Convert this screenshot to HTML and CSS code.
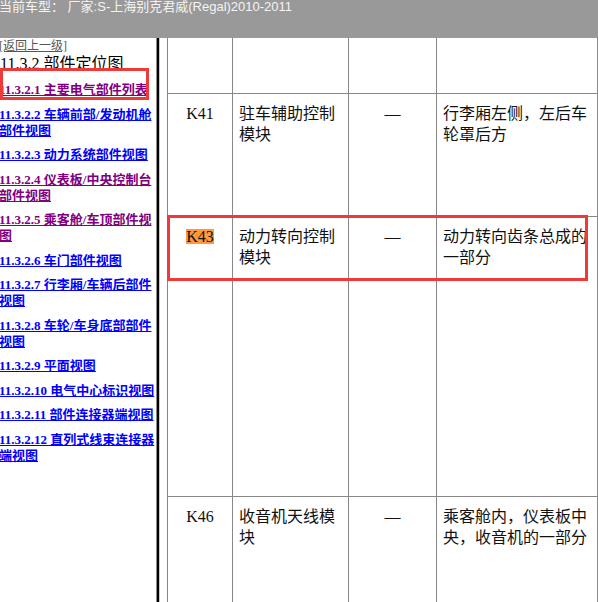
FILE: index.html
```html
<!DOCTYPE html>
<html lang="zh-CN">
<head>
  <meta charset="UTF-8">
  <meta name="viewport" content="width=device-width, initial-scale=1.0">
  <title>部件定位图</title>
  <link rel="stylesheet" href="styles.css">
</head>
<body>
  <div class="topbar">当前车型： 厂家:S-上海别克君威(Regal)2010-2011</div>
  <div class="frames">
    <div class="nav-pane">
      <div class="nav-inner">
        <a class="back" href="#">[返回上一级]</a>
        <div class="nav-title">11.3.2 部件定位图</div>
        <ul class="nav-list">
          <li><a class="seen" href="#">11.3.2.1 主要电气部件列表</a></li>
          <li><a href="#">11.3.2.2 车辆前部/发动机舱部件视图</a></li>
          <li><a href="#">11.3.2.3 动力系统部件视图</a></li>
          <li><a class="seen" href="#">11.3.2.4 仪表板/中央控制台部件视图</a></li>
          <li><a class="seen" href="#">11.3.2.5 乘客舱/车顶部件视图</a></li>
          <li><a href="#">11.3.2.6 车门部件视图</a></li>
          <li><a href="#">11.3.2.7 行李厢/车辆后部件视图</a></li>
          <li><a href="#">11.3.2.8 车轮/车身底部部件视图</a></li>
          <li><a href="#">11.3.2.9 平面视图</a></li>
          <li><a href="#">11.3.2.10 电气中心标识视图</a></li>
          <li><a href="#">11.3.2.11 部件连接器端视图</a></li>
          <li><a href="#">11.3.2.12 直列式线束连接器端视图</a></li>
        </ul>
      </div>
    </div>
    <div class="frame-border"></div>
    <div class="main-pane">
      <table class="parts">
        <colgroup>
          <col class="c-code">
          <col class="c-name">
          <col class="c-conn">
          <col class="c-place">
        </colgroup>
        <tr class="row-first">
          <td></td><td></td><td></td><td></td>
        </tr>
        <tr class="row-k41">
          <td class="code">K41</td>
          <td>驻车辅助控制模块</td>
          <td class="conn">—</td>
          <td>行李厢左侧，左后车轮罩后方</td>
        </tr>
        <tr class="row-k43">
          <td class="code"><span class="hit">K43</span></td>
          <td>动力转向控制模块</td>
          <td class="conn">—</td>
          <td>动力转向齿条总成的一部分</td>
        </tr>
        <tr class="row-k46">
          <td class="code">K46</td>
          <td>收音机天线模块</td>
          <td class="conn">—</td>
          <td>乘客舱内，仪表板中央，收音机的一部分</td>
        </tr>
      </table>
    </div>
    <!-- red callouts drawn over the page -->
    <div class="mark mark-nav"></div>
    <div class="mark mark-row"></div>
  </div>
</body>
</html>
```

FILE: styles.css
```css
* { box-sizing: border-box; }
html, body {
  margin: 0;
  height: 602px;
  overflow: hidden;
  background: #fff;
}
.topbar {
  height: 38px;
  background: #999;
  color: #f4f4f4;
  font: 13px/14px "Liberation Sans", "Noto Sans CJK SC", sans-serif;
  white-space: nowrap;
  margin-left: -1px;
  padding-top: 0;
}
.frames {
  position: relative;
  display: flex;
  height: 564px;
  overflow: hidden;
}
.nav-pane {
  flex: none;
  width: 156px;
  overflow: hidden;
}
.nav-inner {
  margin-left: -1px;
  width: 157px;
}
.back {
  display: block;
  height: 17px;
  font: 12px/17px "Liberation Serif", "Noto Sans CJK SC", serif;
  color: #555;
  text-decoration: underline;
}
.nav-title {
  font: 16px/18px "Liberation Serif", "Noto Sans CJK SC", serif;
  color: #000;
  padding-left: 1px;
}
.nav-list {
  list-style: none;
  margin: 9px 0 0;
  padding: 0;
}
.nav-list li {
  margin-bottom: 8.5px;
  font: bold 13px/16px "Liberation Serif", "Noto Sans CJK SC", serif;
}
.nav-list a {
  color: #0000ff;
  text-decoration: underline;
}
.nav-list a.seen {
  color: #800080;
}
.frame-border {
  flex: none;
  width: 4px;
  border-left: 1px solid #8a8a8a;
  border-right: 1px solid #c8c8c8;
  background: #000;
}
.main-pane {
  flex: 1;
  overflow: hidden;
  padding-left: 7px;
}
.parts {
  border-collapse: collapse;
  table-layout: fixed;
  width: 430px;
  margin-top: -20px;
  font: 16px/21px "Liberation Serif", "Noto Sans CJK SC", sans-serif;
  color: #111;
}
.c-code { width: 65px; }
.c-name { width: 116px; }
.c-conn { width: 88px; }
.c-place { width: 161px; }
.parts td {
  border: 1px solid #888;
  vertical-align: top;
  padding: 9px 6px 0;
}
.parts .code,
.parts .conn {
  text-align: center;
}
.row-first { height: 75px; }
.row-k41 { height: 123px; }
.row-k43 { height: 280px; }
.row-k46 { height: 160px; }
.hit {
  display: inline-block;
  height: 15px;
  line-height: 15px;
  margin-top: 3px;
  background: #ff9a3c;
  vertical-align: top;
}
.mark {
  position: absolute;
  border: 3px solid #f03a3a;
}
.mark-nav {
  left: 0;
  top: 30px;
  width: 149px;
  height: 32px;
}
.mark-row {
  left: 167px;
  top: 177px;
  width: 421px;
  height: 66px;
}
```
